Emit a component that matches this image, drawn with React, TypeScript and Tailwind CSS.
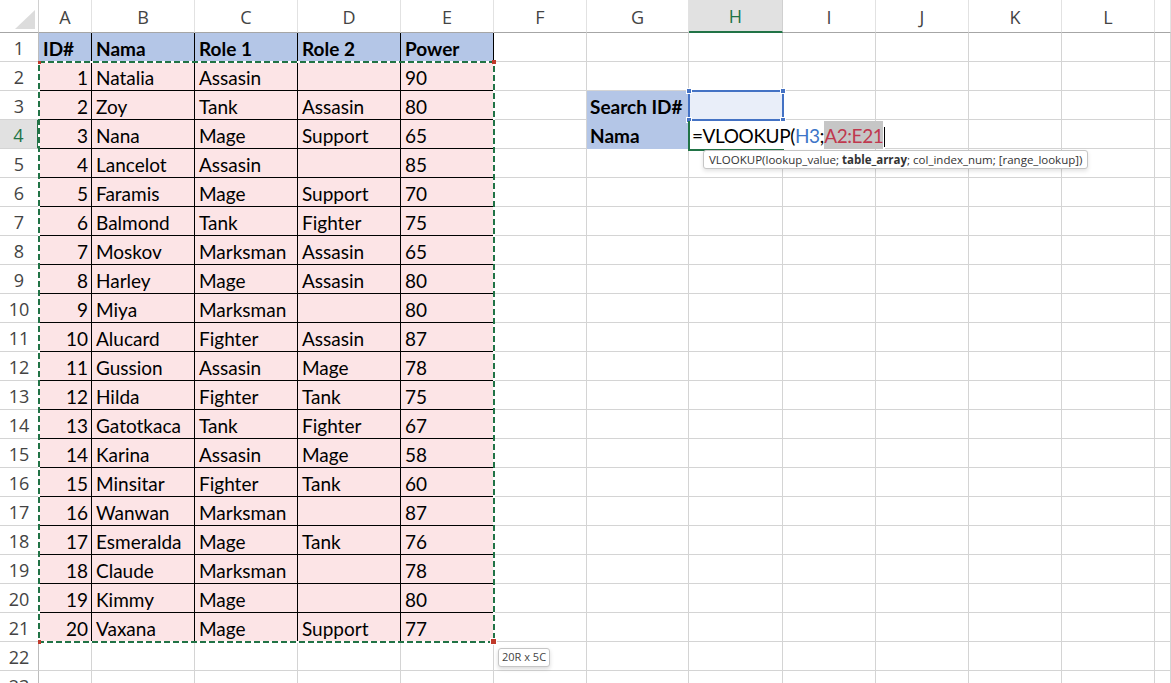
import React from "react";

type Row = [number, string, string, string, number];
const data: Row[] = [
  [1, "Natalia", "Assasin", "", 90],
  [2, "Zoy", "Tank", "Assasin", 80],
  [3, "Nana", "Mage", "Support", 65],
  [4, "Lancelot", "Assasin", "", 85],
  [5, "Faramis", "Mage", "Support", 70],
  [6, "Balmond", "Tank", "Fighter", 75],
  [7, "Moskov", "Marksman", "Assasin", 65],
  [8, "Harley", "Mage", "Assasin", 80],
  [9, "Miya", "Marksman", "", 80],
  [10, "Alucard", "Fighter", "Assasin", 87],
  [11, "Gussion", "Assasin", "Mage", 78],
  [12, "Hilda", "Fighter", "Tank", 75],
  [13, "Gatotkaca", "Tank", "Fighter", 67],
  [14, "Karina", "Assasin", "Mage", 58],
  [15, "Minsitar", "Fighter", "Tank", 60],
  [16, "Wanwan", "Marksman", "", 87],
  [17, "Esmeralda", "Mage", "Tank", 76],
  [18, "Claude", "Marksman", "", 78],
  [19, "Kimmy", "Mage", "", 80],
  [20, "Vaxana", "Mage", "Support", 77],
];

const letters = ["A", "B", "C", "D", "E", "F", "G", "H", "I", "J", "K", "L", ""];

function cellFor(r: number, c: number) {
  const base = "border-r border-b flex items-center overflow-hidden whitespace-nowrap";
  if (r === 1 && c >= 1 && c <= 5) {
    const t = ["ID#", "Nama", "Role 1", "Role 2", "Power"][c - 1];
    return (
      <div key={`${r}-${c}`} className={`${base} bg-[#b4c6e7] border-black font-bold px-[4px] pt-[4px]`}>
        {t}
      </div>
    );
  }
  if (r >= 2 && r <= 21 && c >= 1 && c <= 5) {
    const row = data[r - 2];
    const v = row[c - 1];
    if (c === 1) {
      return (
        <div key={`${r}-${c}`} className={`${base} bg-[#fce4e6] border-black justify-end px-[3px] pt-[4px]`}>
          {v}
        </div>
      );
    }
    return (
      <div key={`${r}-${c}`} className={`${base} bg-[#fce4e6] border-black px-[4px] pt-[4px]`}>
        {v}
      </div>
    );
  }
  if ((r === 3 || r === 4) && c === 7) {
    return (
      <div key={`${r}-${c}`} className={`${base} bg-[#b4c6e7] border-[#b4c6e7] font-bold px-[3px] pt-[4px]`}>
        {r === 3 ? "Search ID#" : "Nama"}
      </div>
    );
  }
  if (r === 3 && c === 8) {
    return <div key={`${r}-${c}`} className={`${base} bg-[#e9eef9] border-[#d4d4d4]`} />;
  }
  return <div key={`${r}-${c}`} className={`${base} border-[#d4d4d4]`} />;
}

export default function App() {
  const rows: React.ReactNode[] = [];
  for (let r = 1; r <= 23; r++) {
    const active = r === 4;
    rows.push(
      <div
        key={`rh-${r}`}
        className={
          active
            ? "flex items-center justify-center bg-[#e1e1e1] text-[#217346] border-r-2 border-r-[#217346] border-b border-b-[#d4d4d4] text-[18px] pt-[3px]"
            : "flex items-center justify-center bg-white text-[#444] border-r border-r-[#bdbdbd] border-b border-b-[#d4d4d4] text-[18px] pt-[3px]"
        }
        style={{ fontFamily: "'Open Sans', sans-serif" }}
      >
        {r}
      </div>
    );
    for (let c = 1; c <= 13; c++) rows.push(cellFor(r, c));
  }

  return (
    <div className="relative w-[1171px] h-[683px] overflow-hidden bg-white text-black" style={{ fontFamily: "Lato, 'Liberation Sans', sans-serif" }}>
      <div className="grid grid-cols-[39px_53px_103px_103px_103px_93px_93px_102px_94px_93px_93px_93px_93px_1fr] grid-rows-[33px_repeat(23,29px)] text-[19px]">
        <div className="relative bg-white border-r border-r-[#d0d0d0] border-b border-b-[#a6a6a6]">
          <svg className="absolute left-0 top-0" width="39" height="33" viewBox="0 0 39 33">
            <polygon points="15,29 35,29 35,10" fill="#dcdcdc" />
          </svg>
        </div>
        {letters.map((l, i) =>
          l === "H" ? (
            <div
              key={i}
              className="flex items-center justify-center bg-[#e1e1e1] text-[#217346] border-r border-r-[#d0d0d0] border-b-2 border-b-[#217346] text-[18px] pt-[2px]"
              style={{ fontFamily: "'Open Sans', sans-serif" }}
            >
              {l}
            </div>
          ) : (
            <div
              key={i}
              className="flex items-center justify-center bg-white text-[#444] border-r border-r-[#e2e2e2] border-b border-b-[#a6a6a6] text-[18px] pt-[2px]"
              style={{ fontFamily: "'Open Sans', sans-serif" }}
            >
              {l}
            </div>
          )
        )}
        {rows}
      </div>

      {/* marching ants around A2:E21 */}
      <svg className="absolute left-[37px] top-[60px]" width="460" height="586" viewBox="0 0 460 586">
        <rect x="2" y="2" width="455" height="580" fill="none" stroke="#ffffff" strokeWidth="2" />
        <rect x="2" y="2" width="455" height="580" fill="none" stroke="#217346" strokeWidth="2" strokeDasharray="6 3" />
        <rect x="1" y="1" width="3" height="3" fill="#c0392b" />
        <rect x="455" y="0" width="4" height="4" fill="#c0392b" />
        <rect x="1" y="580" width="3" height="4" fill="#c0392b" />
        <rect x="453" y="578" width="7" height="7" fill="#ffffff" />
        <rect x="454" y="579" width="5" height="5" fill="#c0392b" />
      </svg>

      {/* H3 referenced range (blue) */}
      <svg className="absolute left-[686px] top-[88px]" width="101" height="36" viewBox="0 0 101 36">
        <rect x="3" y="3" width="94" height="29" fill="none" stroke="#4472c4" strokeWidth="2" />
        <rect x="0.5" y="0.5" width="5" height="5" fill="#4472c4" stroke="#fff" strokeWidth="1" />
        <rect x="94.5" y="0.5" width="5" height="5" fill="#4472c4" stroke="#fff" strokeWidth="1" />
        <rect x="0.5" y="29.5" width="5" height="5" fill="#4472c4" stroke="#fff" strokeWidth="1" />
        <rect x="94.5" y="29.5" width="5" height="5" fill="#4472c4" stroke="#fff" strokeWidth="1" />
      </svg>

      {/* H4 active cell editor */}
      <div className="absolute left-[688px] top-[121px] w-[96px] h-[30px] border-l-2 border-b-2 border-[#217346]" />
      <div className="absolute left-[690px] top-[121px] h-[28px] flex items-center bg-white whitespace-nowrap text-[19px] tracking-[-0.4px] pt-[3px]">
        <span className="pl-[2px]">=VLOOKUP(</span>
        <span className="text-[#3e76c8]">H3</span>
        <span>;</span>
        <span className="bg-[#c6c6c6] text-[#c0384e] h-[28px] flex items-center pt-[3px] -mt-[3px]">A2:E21</span>
        <span className="inline-block w-[1px] h-[20px] bg-black ml-[1px]" />
      </div>

      {/* function tooltip */}
      <div
        className="absolute left-[703px] top-[150px] h-[19px] px-[5px] flex items-center bg-white border border-[#c6c6c6] rounded-[3px] shadow-[0_2px_4px_rgba(0,0,0,0.12)] text-[11.5px] text-[#333] whitespace-nowrap"
        style={{ fontFamily: "'Open Sans', sans-serif" }}
      >
        <span>VLOOKUP(lookup_value;&nbsp;</span>
        <b className="font-bold">table_array</b>
        <span>; col_index_num; [range_lookup])</span>
      </div>

      {/* size tooltip */}
      <div
        className="absolute left-[498px] top-[648px] h-[19px] px-[3px] flex items-center bg-white border border-[#c6c6c6] rounded-[3px] shadow-[0_2px_4px_rgba(0,0,0,0.15)] text-[11px] text-[#444] whitespace-nowrap"
        style={{ fontFamily: "'Open Sans', sans-serif" }}
      >
        20R x 5C
      </div>
    </div>
  );
}
